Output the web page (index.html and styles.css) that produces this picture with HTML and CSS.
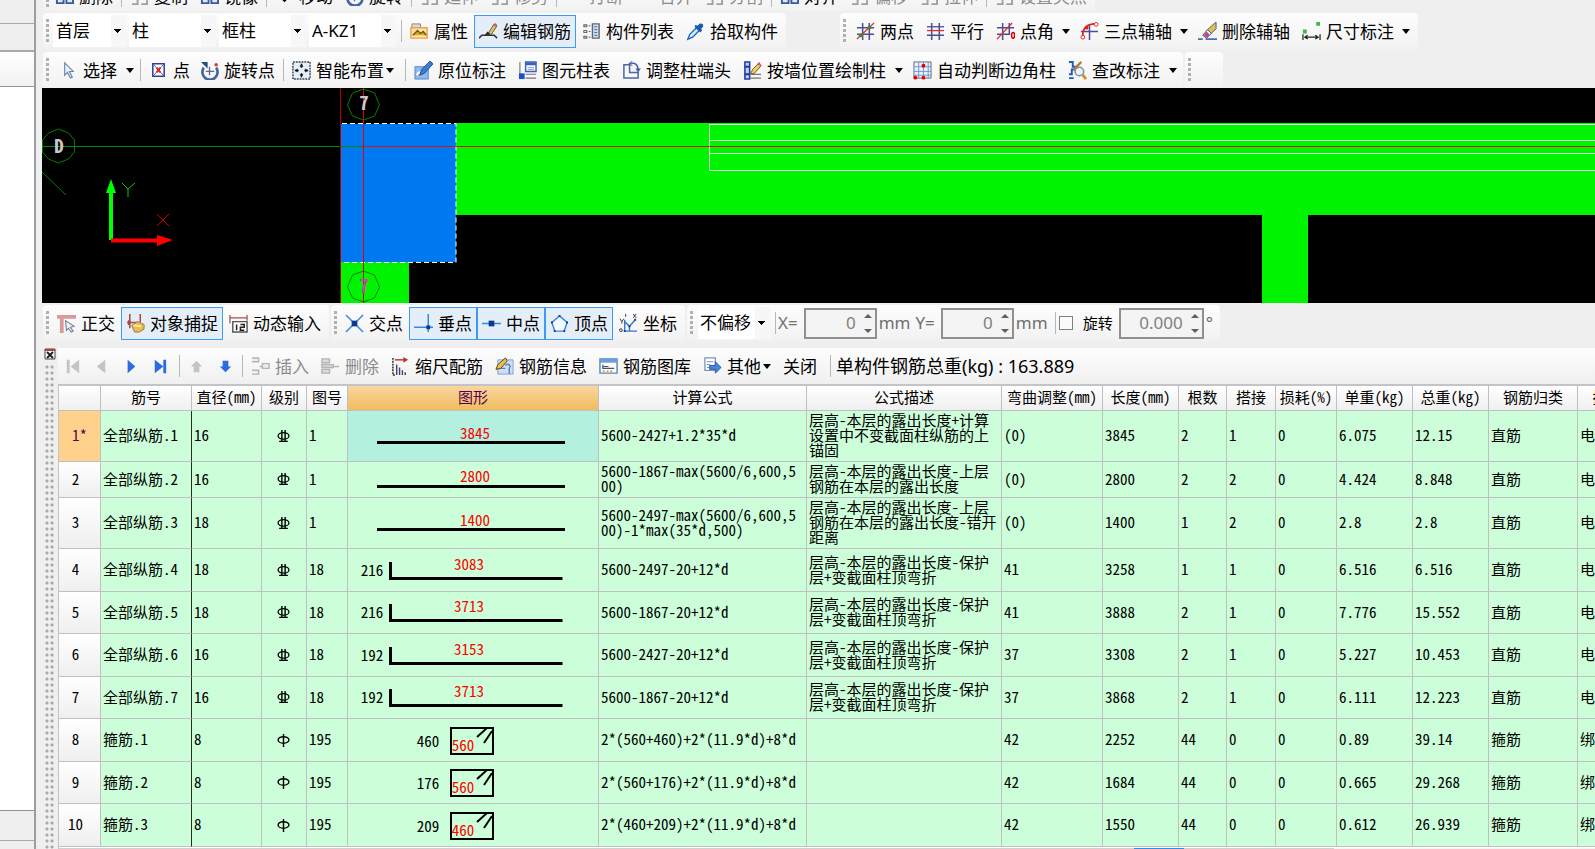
FILE: index.html
```html
<!DOCTYPE html>
<html lang="zh-CN">
<head>
<meta charset="utf-8">
<title>编辑钢筋</title>
<link rel="stylesheet" href="styles.css">
</head>
<body>
<svg class="sprite" aria-hidden="true">
  <symbol id="i-props" viewBox="0 0 20 20"><path d="M2 2h9v4H2z" fill="#d8d8d8" stroke="#888"/><path d="M1 6h17v11H1z" fill="#ffe3a8" stroke="#f0a040" stroke-width="1.5"/><path d="M3 14l5-5 3 3 3-2 3 4" fill="#d8a820" stroke="#6a5a20" stroke-width="1.5"/></symbol>
  <symbol id="i-edit" viewBox="0 0 20 20"><path d="M0 17l3-3h13l3 3" fill="none" stroke="#333" stroke-width="1.6"/><path d="M9 13l7-11 3 2-6 9z" fill="#f0c050" stroke="#555"/><path d="M15 4l2-3 2 2-1 2z" fill="#d06060"/><path d="M6 14l3-4 3 3z" fill="#222"/></symbol>
  <symbol id="i-list" viewBox="0 0 20 20"><path d="M11 2h7v15h-7z" fill="#cfe0f8" stroke="#666" stroke-width="1.5"/><path d="M13 5h3M13 8h3M13 11h3M13 14h3" stroke="#3060b0"/><path d="M2 3h3v2H2zM2 9h3v2H2zM2 15h3v2H2zM7 4h2M7 10h2M7 16h2" fill="none" stroke="#667" stroke-width="1.2"/></symbol>
  <symbol id="i-pick" viewBox="0 0 20 20"><path d="M2 18l2-5 7-7 3 3-7 7z" fill="#d6ecff" stroke="#2068b8" stroke-width="1.5"/><path d="M9 5l6 6 2-2-1-2 2-2c1-3-2-4-4-3l-2 2-2-1z" fill="#1c5cb0"/></symbol>
  <symbol id="i-two" viewBox="0 0 20 20"><path d="M7 1v18M14 1v18M1 6h18M1 13h18" stroke="#4a5098" stroke-width="1.6"/><path d="M1 18L19 1" stroke="#e03030" stroke-width="1.4"/><circle cx="14" cy="6" r="2" fill="#3c8a20"/><circle cx="5" cy="14" r="2" fill="#3c8a20"/></symbol>
  <symbol id="i-par" viewBox="0 0 20 20"><path d="M6 1v18M14 1v18M1 14h18" stroke="#4a5098" stroke-width="1.6"/><path d="M1 5h18" stroke="#4a5098" stroke-width="1.4"/><path d="M1 9h18" stroke="#e03030" stroke-width="1.4"/></symbol>
  <symbol id="i-ang" viewBox="0 0 20 20"><path d="M7 1v18M14 1v12M1 6h18M1 13h14" stroke="#4a5098" stroke-width="1.6"/><path d="M1 18L17 1" stroke="#e03030" stroke-width="1.4"/><ellipse cx="18" cy="14" rx="1.6" ry="3" fill="none" stroke="#e00000" stroke-width="1.6"/></symbol>
  <symbol id="i-three" viewBox="0 0 20 20"><path d="M10 2v17M1 10h18" stroke="#4a5098" stroke-width="1.6"/><path d="M3 16C2 7 7 2 16 2" fill="none" stroke="#e02020" stroke-width="1.8"/><circle cx="3" cy="16" r="2" fill="#fff" stroke="#e02020"/><circle cx="7" cy="6" r="2" fill="#e02020"/><circle cx="17" cy="2.500" r="2" fill="#fff" stroke="#e02020"/></symbol>
  <symbol id="i-erase" viewBox="0 0 20 20"><path d="M0 18h5M8 18h12" stroke="#4870a8" stroke-width="2"/><path d="M5 14l5-6 4 4-5 5z" fill="#fff" stroke="#445"/><path d="M6 14l3-4 3 3-2 4z" fill="#b84890"/><path d="M10 8l9-8v7l-5 5z" fill="#e0c050" stroke="#445a90"/></symbol>
  <symbol id="i-dim" viewBox="0 0 20 20"><path d="M1 8h4v4H1zM15 0h4v4h-4z" fill="#3cb84c"/><path d="M1 13v6M19 13v6M3 16h14M6 14l-3 2 3 2M14 14l3 2-3 2" fill="none" stroke="#222" stroke-width="1.3"/></symbol>
  <symbol id="i-arrow" viewBox="0 0 20 20"><path d="M6 2v13l3-3 3 6 2-1-3-6h4z" fill="#eaf2fb" stroke="#6a86a8" stroke-width="1.2"/></symbol>
  <symbol id="i-pt" viewBox="0 0 20 20"><path d="M4 3h12v13H4z" fill="#fff" stroke="#334090" stroke-width="1.6"/><path d="M5 4l10 11M15 4L5 15" stroke="#4a58a8"/><path d="M8 7l4 5M12 7l-4 5" stroke="#e02020" stroke-width="1.8"/></symbol>
  <symbol id="i-rot" viewBox="0 0 20 20"><path d="M4 7a8 8 0 1 0 13 0" fill="none" stroke="#46649c" stroke-width="2.800"/><path d="M1 1h7v7z" fill="#2c4a88"/><path d="M10 6v9M6 11h9" stroke="#5a6a90" stroke-width="1.4"/><circle cx="17" cy="4" r="1.800" fill="#e03030"/></symbol>
  <symbol id="i-smart" viewBox="0 0 20 20"><path d="M1 1h18v18H1z" fill="#e6eef6" stroke="#345" stroke-width="1.500" stroke-dasharray="2 1"/><path d="M10 3v4M10 13v4M3 10h4M13 10h4" stroke="#111" stroke-width="1.500"/><path d="M8 6l2-3 2 3zM8 14l2 3 2-3zM6 8l-3 2 3 2zM14 8l3 2-3 2z" fill="#111"/></symbol>
  <symbol id="i-note" viewBox="0 0 20 20"><path d="M1 6h14v13H1z" fill="#8fb8ec" stroke="#5a88c8"/><path d="M3 15c2-5 3-2 5-4" fill="none" stroke="#fff" stroke-width="2"/><path d="M6 15l2-6L17 0l3 3-9 10z" fill="#3d7bd0" stroke="#1f4f9c"/></symbol>
  <symbol id="i-sheet" viewBox="0 0 20 20"><path d="M2 1v18M8 18h11M8 14h11" stroke="#777" stroke-width="1.2"/><path d="M8 1h11v10H8z" fill="#fff" stroke="#3a62b8" stroke-width="1.5"/><path d="M8 3h11" stroke="#3a62b8" stroke-width="3"/><path d="M10 7h7M10 9h7" stroke="#7a9ad8"/><path d="M1 13h6v6H1z" fill="#1c50c8"/></symbol>
  <symbol id="i-adj" viewBox="0 0 20 20"><path d="M2 4h6v8h9v6H2z" fill="#f4f8ff" stroke="#5068a0" stroke-width="1.6"/><path d="M8 3c6-2 9 1 9 7" fill="none" stroke="#4a60b0" stroke-width="1.6"/><path d="M14 8l3 4 3-4z" fill="#4a60b0"/><path d="M11 0L7 3l4 2" fill="none" stroke="#4a60b0"/></symbol>
  <symbol id="i-wall" viewBox="0 0 20 20"><path d="M2 1h5v18H2z" fill="#bcd0f4" stroke="#2038a0" stroke-width="1.6"/><path d="M2 6h5M2 14h5" stroke="#2038a0" stroke-width="2"/><path d="M7 18h12M9 14h10" stroke="#777" stroke-width="1.3"/><path d="M8 14l2-5 7-7 2 3-7 8z" fill="#f0d060" stroke="#665020"/><path d="M15 3l2-2 2 3-2 1z" fill="#d06060"/></symbol>
  <symbol id="i-grid" viewBox="0 0 20 20"><path d="M1 1h18v17H1z" fill="#e8f0fc" stroke="#667"/><path d="M6 1v17M11 1v17M16 1v17M1 6h18M1 11h18M1 15h18" stroke="#6f95d0"/><circle cx="11" cy="5" r="2" fill="#e00000"/><circle cx="2.500" cy="17.500" r="2" fill="#e00000"/><circle cx="11" cy="17.500" r="2" fill="#e00000"/></symbol>
  <symbol id="i-check" viewBox="0 0 20 20"><path d="M1 1h4v5h3v3H4v5H1M1 18h5" fill="none" stroke="#2058c0" stroke-width="2"/><path d="M6 9l8-8" stroke="#b08030" stroke-width="2.500"/><circle cx="12" cy="11" r="4.500" fill="#eef6ff" stroke="#8090a0" stroke-width="1.600"/><path d="M15 14l4 5" stroke="#d09030" stroke-width="3"/></symbol>
  <symbol id="i-ortho" viewBox="0 0 20 20"><path d="M0 3h20M5 1v19" stroke="#d99a9a" stroke-width="4"/><path d="M9 7l9 6-4 1 3 4-2 1-3-4-2 2z" fill="#f2f5fa" stroke="#76869a" stroke-width="1.200"/></symbol>
  <symbol id="i-osnap" viewBox="0 0 20 20"><path d="M4 0v15M15 0v9M1 9h12" stroke="#a84848" stroke-width="1.600"/><path d="M2 6l4 3-4 3z" fill="#a84848"/><path d="M6 12l6-4 7 3v5l-5 3H9z" fill="#e8bc58" stroke="#a07828"/><path d="M8 12l8 1" stroke="#fff0b0" stroke-width="2"/></symbol>
  <symbol id="i-dyn" viewBox="0 0 20 20"><path d="M1 1v9M19 1v6M1 4h18" stroke="#a05050" stroke-width="1.300"/><path d="M4 8h15v11H4z" fill="#fff" stroke="#555" stroke-width="1.500"/><path d="M8 11v6M12 11h4v3h-4v3h4" fill="none" stroke="#222" stroke-width="1.600"/></symbol>
  <symbol id="i-cross" viewBox="0 0 20 20"><path d="M1 1l18 18M19 1L1 19" stroke="#3a86d8" stroke-width="1.500"/><path d="M7 7h6v6H7z" fill="#0c3a8c"/></symbol>
  <symbol id="i-perp" viewBox="0 0 20 20"><path d="M15 0v19M0 14h20" stroke="#3a86d8" stroke-width="1.600"/><path d="M13 12h4v4h-4z" fill="#0c3a8c"/></symbol>
  <symbol id="i-mid" viewBox="0 0 20 20"><path d="M0 10h20" stroke="#3a86d8" stroke-width="1.600"/><path d="M7 7h6v6H7z" fill="#0c3a8c"/></symbol>
  <symbol id="i-vert" viewBox="0 0 20 20"><path d="M10 2l8 7-3 9H5L2 9z" fill="#f4faff" stroke="#3a86d8" stroke-width="1.500"/><path d="M9 1h2v2H9zM1 8h2v2H1zM17 8h2v2h-2zM4 17h2v2H4zM14 17h2v2h-2z" fill="#0c3a8c"/></symbol>
  <symbol id="i-coord" viewBox="0 0 20 20"><path d="M6 6v12h13M6 8l5 5 6-7M11 13v5" fill="none" stroke="#3a76c8" stroke-width="1.500"/><path d="M1 5l2 3 2-3M3 8v2M7 0v3M15 0l3 4M18 0l-3 4" fill="none" stroke="#334"/><circle cx="2" cy="17" r="1.500" fill="none" stroke="#334"/><path d="M5 17h2v2H5zM10 12h2v2h-2zM16 5h2v2h-2z" fill="#0c3a8c"/></symbol>
  <symbol id="i-first" viewBox="0 0 20 20"><path d="M4 3h3v14H4zM17 3v14L8 10z"/></symbol>
  <symbol id="i-prev" viewBox="0 0 20 20"><path d="M14 3v14L5 10z"/></symbol>
  <symbol id="i-next" viewBox="0 0 20 20"><path d="M7 3v14l8-7z"/></symbol>
  <symbol id="i-last" viewBox="0 0 20 20"><path d="M14 3h3v14h-3zM5 3v14l9-7z"/></symbol>
  <symbol id="i-up" viewBox="0 0 20 20"><path d="M10 4l6 6h-3v6H7v-6H4z"/></symbol>
  <symbol id="i-down" viewBox="0 0 20 20"><path d="M10 16l6-6h-3V4H7v6H4z"/></symbol>
  <symbol id="i-ins" viewBox="0 0 20 20"><path d="M1 1h7v4H1M1 14h7v4H1M12 7h7v5h-7zM9 10h3" fill="#eee" stroke="#b4b4b4" stroke-width="1.500"/></symbol>
  <symbol id="i-del" viewBox="0 0 20 20"><path d="M1 2h8v4H1zM1 13h8v4H1zM1 8h12v3H1zM14 10h5" fill="#ddd" stroke="#b4b4b4" stroke-width="1.500"/></symbol>
  <symbol id="i-scale" viewBox="0 0 20 20"><path d="M2 1v18h2" fill="none" stroke="#222" stroke-width="1.500" stroke-dasharray="2 1"/><path d="M4 3h12" stroke="#c03020" stroke-width="1.500"/><path d="M13 0l5 3-5 3z" fill="#c03020"/><path d="M6 8v11M9 11v8M12 14v5M15 16v3" stroke="#446" stroke-width="1.500"/></symbol>
  <symbol id="i-info" viewBox="0 0 20 20"><path d="M3 3h16v15H3z" fill="#cfdef8" stroke="#86a0cc"/><path d="M11 9c3-3 6 0 4 3v6M3 12h8" fill="none" stroke="#6080b0" stroke-width="1.500"/><path d="M1 13l2-5 8-7 2 3-7 8z" fill="#e8c050" stroke="#54401a"/></symbol>
  <symbol id="i-lib" viewBox="0 0 20 20"><path d="M1 2h18v15H1z" fill="#fff" stroke="#5a84c0" stroke-width="1.500"/><path d="M1 4h18" stroke="#6f9cdc" stroke-width="4"/><path d="M4 8v4h12M4 10h6" fill="none" stroke="#456" stroke-width="1.200"/><path d="M4 15h2M8 15h2M12 15h2" stroke="#e0a050" stroke-width="2"/></symbol>
  <symbol id="i-other" viewBox="0 0 20 20"><path d="M2 1h11v13H2z" fill="#fff" stroke="#7f94bc" stroke-width="1.400"/><path d="M4 5h7M4 8h4M4 11h3" stroke="#6a86c0"/><path d="M7 9h6V5l6 6-6 6v-4H7z" fill="#4a84e0" stroke="#2458a8"/></symbol>
  <symbol id="i-g3" viewBox="0 0 12 12"><ellipse cx="6" cy="5.500" rx="5" ry="3" fill="none" stroke="#000" stroke-width="1.200"/><path d="M4.500 0v10M7.500 0v10M2 10.500h8" stroke="#000" stroke-width="1.300"/></symbol>
  <symbol id="i-g1" viewBox="0 0 12 12"><ellipse cx="6" cy="5.500" rx="5" ry="3" fill="none" stroke="#000" stroke-width="1.300"/><path d="M6 0v12" stroke="#000" stroke-width="1.300"/></symbol>
  <symbol id="i-edge" viewBox="0 0 20 20"><path d="M2 2h7v15H2zM12 8h7v9h-7z" fill="#dfe9fa" stroke="#3a5a9c" stroke-width="2"/></symbol>
  <symbol id="i-edgeg" viewBox="0 0 20 20"><path d="M2 4h6v14H2M12 10h6v8h-6" fill="none" stroke="#a0a0a0" stroke-width="2"/></symbol>
</svg>

<div class="app">
  <aside class="side">
    <div class="side-tab"></div>
    <div class="side-tab second"></div>
    <div class="side-head"></div>
    <div class="side-body"></div>
    <div class="side-tab third"></div>
    <div class="side-foot"></div>
  </aside>

  <main class="main">
    <div class="bar clipped">
      <div class="strip">
        <span class="grip"></span>
        <button class="tool"><svg><use href="#i-edge"/></svg>删除</button><span class="sep"></span>
        <button class="tool"><svg><use href="#i-edgeg"/></svg>复制</button>
        <button class="tool"><svg><use href="#i-edge"/></svg>镜像</button><span class="sep"></span>
        <button class="tool"><svg><use href="#i-down"/></svg>移动</button>
        <button class="tool"><svg><use href="#i-rot"/></svg>旋转</button><span class="sep"></span>
        <button class="tool" disabled><svg><use href="#i-edgeg"/></svg>延伸</button>
        <button class="tool" disabled><svg><use href="#i-edgeg"/></svg>修剪</button><span class="sep"></span>
        <button class="tool" disabled><svg></svg>打断</button>
        <button class="tool" disabled><svg></svg>合并</button>
        <button class="tool" disabled><svg><use href="#i-edgeg"/></svg>分割</button><span class="sep"></span>
        <button class="tool"><svg><use href="#i-edge"/></svg>对齐</button>
        <button class="tool" disabled><svg><use href="#i-edgeg"/></svg>偏移</button>
        <button class="tool" disabled><svg><use href="#i-edgeg"/></svg>拉伸</button><span class="sep"></span>
        <button class="tool" disabled><svg><use href="#i-edgeg"/></svg>设置夹点</button>
      </div>
    </div>

    <div class="bar">
      <div class="strip strip-props">
        <span class="grip"></span>
        <div class="combos">
          <select class="combo short" aria-label="楼层"><option>首层</option></select>
          <select class="combo" aria-label="构件类型"><option>柱</option></select>
          <select class="combo" aria-label="构件类别"><option>框柱</option></select>
          <select class="combo" aria-label="构件名称"><option>A-KZ1</option></select>
        </div>
        <span class="sep lead"></span>
        <button class="tool"><svg><use href="#i-props"/></svg>属性</button>
        <button class="tool on"><svg><use href="#i-edit"/></svg>编辑钢筋</button>
        <button class="tool"><svg><use href="#i-list"/></svg>构件列表</button>
        <button class="tool"><svg><use href="#i-pick"/></svg>拾取构件</button>
      </div>
      <div class="strip strip-axis">
        <span class="grip"></span>
        <button class="tool"><svg><use href="#i-two"/></svg>两点</button>
        <button class="tool"><svg><use href="#i-par"/></svg>平行</button>
        <button class="tool menu"><svg><use href="#i-ang"/></svg>点角</button>
        <button class="tool menu"><svg><use href="#i-three"/></svg>三点辅轴</button>
        <button class="tool"><svg><use href="#i-erase"/></svg>删除辅轴</button>
        <button class="tool menu"><svg><use href="#i-dim"/></svg>尺寸标注</button>
      </div>
    </div>

    <div class="bar">
      <div class="strip">
        <span class="grip"></span>
        <button class="tool menu"><svg><use href="#i-arrow"/></svg>选择</button><span class="sep"></span>
        <button class="tool compact"><svg><use href="#i-pt"/></svg>点</button>
        <button class="tool"><svg><use href="#i-rot"/></svg>旋转点</button><span class="sep"></span>
        <button class="tool menu tight"><svg><use href="#i-smart"/></svg>智能布置</button><span class="sep lead"></span>
        <button class="tool"><svg><use href="#i-note"/></svg>原位标注</button>
        <button class="tool"><svg><use href="#i-sheet"/></svg>图元柱表</button>
        <button class="tool"><svg><use href="#i-adj"/></svg>调整柱端头</button>
        <button class="tool menu"><svg><use href="#i-wall"/></svg>按墙位置绘制柱</button>
        <button class="tool"><svg><use href="#i-grid"/></svg>自动判断边角柱</button>
        <button class="tool menu"><svg><use href="#i-check"/></svg>查改标注</button>
      </div>
      <div class="strip empty"><span class="grip"></span></div>
    </div>

    <svg class="canvas" role="img" aria-label="绘图区">
      <rect width="100%" height="100%" fill="#000"/>
      <rect x="413" y="35" width="100%" height="92" fill="#00f300"/>
      <rect x="1220" y="127" width="46" height="88" fill="#00f300"/>
      <rect x="299" y="174" width="68" height="41" fill="#00f300"/>
      <rect x="299" y="36" width="115" height="138" fill="#0078f0"/>
      <path d="M300 35.500H414V174.500H300" fill="none" stroke="#fff" stroke-dasharray="5 3"/>
      <path d="M667.500 36V82.500H1900M667.500 52.500H1900M667.500 65.500H1900M667.500 36.500H1900" fill="none" stroke="#d8ffd8"/>
      <path d="M0 58.500H321" stroke="#008a00"/>
      <path d="M321 58.500H1900" stroke="#e01400"/>
      <path d="M298.500 0V215" stroke="#b00000"/>
      <path d="M321.500 0V215" stroke="#e00010"/>
      <g fill="none" stroke="#008000">
        <path d="M16.500 41l10 4 6 7v12l-6 7-10 4-10-4-6-7v-12l6-7z"/>
        <path d="M321.500 1l11 4 5 12-5 11-11 4-11-4-5-11 5-12z"/>
        <path d="M321.500 183l11 4 5 12-5 11-11 4-11-4-5-11 5-12z"/>
        <path d="M0 84l24 23"/>
      </g>
      <text class="axis" x="17" y="65">D</text>
      <text class="axis" x="322" y="22">7</text>
      <text class="axis low" x="322" y="205">7</text>
      <path d="M69 152V104" stroke="#0f0" stroke-width="4"/><path d="M64 105l5-14 5 14z" fill="#0f0"/>
      <path d="M69 152.500H117" stroke="#f00" stroke-width="4"/><path d="M115 147l16 5-16 6z" fill="#f00"/>
      <path d="M80 95l6 6 7-6M86 101v8" fill="none" stroke="#00d000"/>
      <path d="M115 126l12 12M127 126l-12 12" stroke="#d00000"/>
    </svg>

    <div class="bar snapbar">
      <div class="strip">
        <span class="grip"></span>
        <button class="tool"><svg><use href="#i-ortho"/></svg>正交</button>
        <button class="tool on"><svg><use href="#i-osnap"/></svg>对象捕捉</button>
        <button class="tool"><svg><use href="#i-dyn"/></svg>动态输入</button>
      </div>
      <div class="strip">
        <span class="grip"></span>
        <button class="tool"><svg><use href="#i-cross"/></svg>交点</button>
        <button class="tool on"><svg><use href="#i-perp"/></svg>垂点</button>
        <button class="tool on"><svg><use href="#i-mid"/></svg>中点</button>
        <button class="tool on"><svg><use href="#i-vert"/></svg>顶点</button>
        <button class="tool"><svg><use href="#i-coord"/></svg>坐标</button>
      </div>
      <div class="strip offsets">
        <span class="grip"></span>
        <select class="combo offset" aria-label="偏移方式"><option>不偏移</option></select>
        <span class="sep lead"></span>
        <label for="off-x">X=</label>
        <span class="spin"><input id="off-x" value="0"><span class="steps"><button aria-label="X 增加"></button><button aria-label="X 减少"></button></span></span>
        <span class="unit">mm</span>
        <label for="off-y">Y=</label>
        <span class="spin"><input id="off-y" value="0"><span class="steps"><button aria-label="Y 增加"></button><button aria-label="Y 减少"></button></span></span>
        <span class="unit">mm</span>
        <span class="sep"></span>
        <input class="tick" type="checkbox" id="rot-on">
        <label class="rot" for="rot-on">旋转</label>
        <span class="spin angle"><input aria-label="旋转角度" value="0.000"><span class="steps"><button aria-label="角度增加"></button><button aria-label="角度减少"></button></span></span>
        <span class="unit">°</span>
      </div>
    </div>

    <section class="dock">
      <div class="dock-edge">
        <button class="dock-close" aria-label="关闭面板"><svg viewBox="0 0 12 12"><path d="M1 1h10v10H1z" fill="#fff" stroke="#444"/><path d="M1 2h10" stroke="#a04848" stroke-width="2"/><path d="M3 4l6 6M9 4l-6 6" stroke="#222" stroke-width="2"/></svg></button>
        <div class="dock-grip"></div>
      </div>
      <div class="dock-body">
        <div class="navbar">
          <button class="nav off" aria-label="首条"><svg><use href="#i-first"/></svg></button>
          <button class="nav off" aria-label="上一条"><svg><use href="#i-prev"/></svg></button>
          <button class="nav" aria-label="下一条"><svg><use href="#i-next"/></svg></button>
          <button class="nav" aria-label="末条"><svg><use href="#i-last"/></svg></button>
          <span class="sep lead"></span>
          <button class="nav off" aria-label="上移"><svg><use href="#i-up"/></svg></button>
          <button class="nav" aria-label="下移"><svg><use href="#i-down"/></svg></button>
          <span class="sep"></span>
          <button class="tool" disabled><svg><use href="#i-ins"/></svg>插入</button>
          <button class="tool" disabled><svg><use href="#i-del"/></svg>删除</button>
          <button class="tool"><svg><use href="#i-scale"/></svg>缩尺配筋</button>
          <button class="tool"><svg><use href="#i-info"/></svg>钢筋信息</button>
          <button class="tool"><svg><use href="#i-lib"/></svg>钢筋图库</button>
          <button class="tool menu tight"><svg><use href="#i-other"/></svg>其他</button>
          <button class="tool">关闭</button>
          <span class="sep wide"></span>
          <span class="total">单构件钢筋总重(kg) : 163.889</span>
        </div>

        <div class="sheet">
        <table>
          <colgroup><col class="c-no"><col class="c-name"><col class="c-dia"><col class="c-grade"><col class="c-fig"><col class="c-shape"><col class="c-calc"><col class="c-desc"><col class="c-bend"><col class="c-len"><col class="c-qty"><col class="c-lap"><col class="c-loss"><col class="c-unit"><col class="c-sum"><col class="c-type"><col class="c-join"></colgroup>
          <thead><tr><th></th><th>筋号</th><th>直径(mm)</th><th>级别</th><th>图号</th><th class="picked">图形</th><th>计算公式</th><th>公式描述</th><th>弯曲调整(mm)</th><th>长度(mm)</th><th>根数</th><th>搭接</th><th>损耗(%)</th><th>单重(kg)</th><th>总重(kg)</th><th>钢筋归类</th><th>搭接形式</th></tr></thead>
          <tbody>
          <tr class="r3"><th class="picked">1*</th><td>全部纵筋.1</td><td>16</td><td class="g"><svg role="img" aria-label="三级"><use href="#i-g3"/></svg></td><td>1</td>
            <td class="shape picked"><svg height="50"><path d="M29 31.500h188"/><text class="red" x="127" y="28">3845</text></svg></td>
            <td>5600-2427+1.2*35*d</td><td>层高-本层的露出长度+计算<br>设置中不变截面柱纵筋的上<br>锚固</td><td>(0)</td><td>3845</td><td>2</td><td>1</td><td>0</td><td>6.075</td><td>12.15</td><td>直筋</td><td>电渣压力焊</td></tr>
          <tr class="r2"><th>2</th><td>全部纵筋.2</td><td>16</td><td class="g"><svg role="img" aria-label="三级"><use href="#i-g3"/></svg></td><td>1</td>
            <td class="shape"><svg height="35"><path d="M29 24.500h188"/><text class="red" x="127" y="20">2800</text></svg></td>
            <td>5600-1867-max(5600/6,600,5<br>00)</td><td>层高-本层的露出长度-上层<br>钢筋在本层的露出长度</td><td>(0)</td><td>2800</td><td>2</td><td>2</td><td>0</td><td>4.424</td><td>8.848</td><td>直筋</td><td>电渣压力焊</td></tr>
          <tr class="r3"><th>3</th><td>全部纵筋.3</td><td>18</td><td class="g"><svg role="img" aria-label="三级"><use href="#i-g3"/></svg></td><td>1</td>
            <td class="shape"><svg height="50"><path d="M29 31.500h188"/><text class="red" x="127" y="28">1400</text></svg></td>
            <td>5600-2497-max(5600/6,600,5<br>00)-1*max(35*d,500)</td><td>层高-本层的露出长度-上层<br>钢筋在本层的露出长度-错开<br>距离</td><td>(0)</td><td>1400</td><td>1</td><td>2</td><td>0</td><td>2.8</td><td>2.8</td><td>直筋</td><td>电渣压力焊</td></tr>
          <tr><th>4</th><td>全部纵筋.4</td><td>18</td><td class="g"><svg role="img" aria-label="三级"><use href="#i-g3"/></svg></td><td>18</td>
            <td class="shape"><svg height="41"><path d="M42.500 12v16.500h172"/><text x="24" y="26">216</text><text class="red" x="121" y="20">3083</text></svg></td>
            <td>5600-2497-20+12*d</td><td>层高-本层的露出长度-保护<br>层+变截面柱顶弯折</td><td>41</td><td>3258</td><td>1</td><td>1</td><td>0</td><td>6.516</td><td>6.516</td><td>直筋</td><td>电渣压力焊</td></tr>
          <tr><th>5</th><td>全部纵筋.5</td><td>18</td><td class="g"><svg role="img" aria-label="三级"><use href="#i-g3"/></svg></td><td>18</td>
            <td class="shape"><svg height="41"><path d="M42.500 12v16.500h172"/><text x="24" y="26">216</text><text class="red" x="121" y="20">3713</text></svg></td>
            <td>5600-1867-20+12*d</td><td>层高-本层的露出长度-保护<br>层+变截面柱顶弯折</td><td>41</td><td>3888</td><td>2</td><td>1</td><td>0</td><td>7.776</td><td>15.552</td><td>直筋</td><td>电渣压力焊</td></tr>
          <tr><th>6</th><td>全部纵筋.6</td><td>16</td><td class="g"><svg role="img" aria-label="三级"><use href="#i-g3"/></svg></td><td>18</td>
            <td class="shape"><svg height="41"><path d="M42.500 12v16.500h172"/><text x="24" y="26">192</text><text class="red" x="121" y="20">3153</text></svg></td>
            <td>5600-2427-20+12*d</td><td>层高-本层的露出长度-保护<br>层+变截面柱顶弯折</td><td>37</td><td>3308</td><td>2</td><td>1</td><td>0</td><td>5.227</td><td>10.453</td><td>直筋</td><td>电渣压力焊</td></tr>
          <tr><th>7</th><td>全部纵筋.7</td><td>16</td><td class="g"><svg role="img" aria-label="三级"><use href="#i-g3"/></svg></td><td>18</td>
            <td class="shape"><svg height="41"><path d="M42.500 12v16.500h172"/><text x="24" y="26">192</text><text class="red" x="121" y="20">3713</text></svg></td>
            <td>5600-1867-20+12*d</td><td>层高-本层的露出长度-保护<br>层+变截面柱顶弯折</td><td>37</td><td>3868</td><td>2</td><td>1</td><td>0</td><td>6.111</td><td>12.223</td><td>直筋</td><td>电渣压力焊</td></tr>
          <tr><th>8</th><td>箍筋.1</td><td>8</td><td class="g"><svg role="img" aria-label="一级"><use href="#i-g1"/></svg></td><td>195</td>
            <td class="shape"><svg height="41"><path class="hoop" d="M103 8h42v26h-42zM129 17l10-9M136 23l8-12"/><text x="80" y="27">460</text><text class="red" x="115" y="31">560</text></svg></td>
            <td>2*(560+460)+2*(11.9*d)+8*d</td><td></td><td>42</td><td>2252</td><td>44</td><td>0</td><td>0</td><td>0.89</td><td>39.14</td><td>箍筋</td><td>绑扎</td></tr>
          <tr><th>9</th><td>箍筋.2</td><td>8</td><td class="g"><svg role="img" aria-label="一级"><use href="#i-g1"/></svg></td><td>195</td>
            <td class="shape"><svg height="41"><path class="hoop" d="M103 8h42v26h-42zM129 17l10-9M136 23l8-12"/><text x="80" y="27">176</text><text class="red" x="115" y="31">560</text></svg></td>
            <td>2*(560+176)+2*(11.9*d)+8*d</td><td></td><td>42</td><td>1684</td><td>44</td><td>0</td><td>0</td><td>0.665</td><td>29.268</td><td>箍筋</td><td>绑扎</td></tr>
          <tr><th>10</th><td>箍筋.3</td><td>8</td><td class="g"><svg role="img" aria-label="一级"><use href="#i-g1"/></svg></td><td>195</td>
            <td class="shape"><svg height="41"><path class="hoop" d="M103 8h42v26h-42zM129 17l10-9M136 23l8-12"/><text x="80" y="27">209</text><text class="red" x="115" y="31">460</text></svg></td>
            <td>2*(460+209)+2*(11.9*d)+8*d</td><td></td><td>42</td><td>1550</td><td>44</td><td>0</td><td>0</td><td>0.612</td><td>26.939</td><td>箍筋</td><td>绑扎</td></tr>
          </tbody>
        </table>
        <div class="scroll"><span class="thumb"></span></div>
        </div>
      </div>
    </section>
  </main>
</div>
</body>
</html>
```
FILE: styles.css
```css
* { box-sizing: border-box; }
body {
  margin: 0;
  height: 100vh;
  overflow: hidden;
  background: #efefef;
  color: #000;
  font: 17px/24px "Noto Sans CJK SC", "Noto Sans", sans-serif;
}
.sprite { display: none; }
button { border: 0; margin: 0; padding: 0; background: none; font: inherit; color: inherit; white-space: nowrap; }
.app { display: flex; height: 100%; overflow: hidden; }

/* left panel */
.side {
  flex: 0 0 36px;
  display: flex;
  flex-direction: column;
  border-right: 2px solid #9c9ca4;
}
.side-tab { flex: 0 0 24px; border-bottom: 1px solid #a8a8a8; }
.side-tab.second { flex-basis: 28px; border-bottom-width: 2px; }
.side-tab.third { flex-basis: 30px; }
.side-head { flex: 0 0 34px; background: linear-gradient(#fff, #f1f1f1); }
.side-body { flex: 1; background: #fff; border: solid #8e959c; border-width: 1px 0; }
.side-foot { flex: 0 0 8px; }

/* toolbars */
.main { flex: 1; min-width: 0; display: flex; flex-direction: column; padding-left: 6px; }
.bar { display: flex; gap: 2px; flex: 0 0 39px; padding: 0 1px 3px; }
.bar.clipped { flex-basis: 13px; align-items: flex-end; overflow: hidden; padding-bottom: 2px; }
.bar.clipped .strip { height: 30px; }
.bar.clipped .grip { margin-right: 0; }
.strip {
  display: flex;
  align-items: center;
  padding: 0 2px 0 3px;
  border-radius: 4px;
  background: linear-gradient(#fdfdfd, #f2f2f2);
}
.strip-axis { margin-left: 52px; padding-right: 4px; }
.strip.empty { width: 38px; }
.grip {
  flex: 0 0 3px;
  height: 24px;
  margin-right: 4px;
  background: repeating-linear-gradient(#b0b0b0 0 3px, transparent 3px 5px);
}
.sep { flex: 0 0 1px; height: 22px; margin: 0 2px; background: #b8b8b8; }
.sep.lead { margin: 0 2px 0 5px; }
.sep.wide { margin: 0 5px 0 7px; }
.tool { display: flex; align-items: center; gap: 5px; height: 33px; padding: 0 6px; }
.tool svg { width: 19px; height: 19px; flex: none; }
.tool:disabled { color: #8c8c8c; }
.tool.compact { padding: 0 4px 0 6px; }
.tool.on { padding: 0 4px; border: 1px solid #3c9bf8; background: #e4eef8; }
.tool.menu::after {
  content: "";
  margin: 0 -2px 0 4px;
  border: solid transparent;
  border-width: 5px 4px 0;
  border-top-color: #000;
}
.tool.menu.tight::after { margin: 0 0 0 -3px; }
.strip-axis .tool.menu::after { margin: 0 -2px 0 3px; }
.combos { display: flex; gap: 3px; }
.combo {
  appearance: none;
  width: 87px;
  height: 32px;
  padding: 0 18px 0 3px;
  border: 0;
  border-radius: 0;
  color: #000;
  font: 17px/24px "Noto Sans", "Noto Sans CJK SC", sans-serif;
  background:
    linear-gradient(to bottom right, #000 50%, transparent 50%) right 4px center / 4px 4px no-repeat,
    linear-gradient(to bottom left, #000 50%, transparent 50%) right 8px center / 4px 4px no-repeat,
    linear-gradient(to left, #f7f7f7 15px, #fff 15px);
}
.combo.short { width: 73px; }
.combo.offset { width: 72px; }

.canvas { flex: 0 0 215px; width: 100%; margin-top: -3px; }
.axis { fill: #c8c8c8; font: bold 19px "Noto Sans Mono CJK SC", "Liberation Mono", monospace; text-anchor: middle; }
.axis.low { fill: #b050a0; }

/* snap row */
.snapbar { flex-basis: 45px; padding: 2px 1px 7px; }
.snapbar .grip { margin-right: 2px; }
.snapbar .offsets .grip { margin-right: 5px; }
.snapbar .combo { padding: 0 14px 0 2px; }
.offsets { color: #707070; font-family: "Noto Sans", "Noto Sans CJK SC", sans-serif; }
.spin {
  display: flex;
  width: 73px;
  height: 31px;
  margin: 0 2px 0 6px;
  border: 2px solid #909090;
  background: #f4f4f4;
}
.spin input {
  flex: 1;
  min-width: 0;
  padding: 0 8px 0 0;
  border: 0;
  background: none;
  color: #808080;
  font: inherit;
  text-align: right;
}
.steps { display: flex; flex-direction: column; justify-content: space-between; padding: 4px 3px 4px 0; }
.steps button { border: solid transparent; border-width: 0 4px 4px; border-bottom-color: #606060; }
.steps button:last-child { border-width: 4px 4px 0; border-top-color: #606060; }
.spin.angle { width: 85px; }
.unit { margin-right: 5px; }
.tick { appearance: none; width: 14px; height: 14px; margin: 0 10px 0 1px; border: 1px solid #808080; background: #fafafa; }
.rot { color: #000; font-size: 15px; }

/* rebar editor */
.dock { flex: 1; min-height: 0; display: flex; }
.dock-edge { flex: 0 0 16px; display: flex; flex-direction: column; padding-left: 2px; }
.dock-close { width: 12px; height: 12px; }
.dock-close svg { display: block; width: 12px; height: 12px; }
.dock-grip {
  flex: 1;
  margin: 4px 4px 0 1px;
  background: radial-gradient(circle at 2px 3px, #a8a8a8 1px, transparent 2px) 0 0 / 5px 6px;
}
.dock-body { flex: 1; min-width: 0; display: flex; flex-direction: column; }
.navbar {
  flex: 0 0 36px;
  display: flex;
  align-items: center;
  background: linear-gradient(#fdfdfd, #f0f0f0);
}
.nav { width: 29px; height: 30px; fill: #2c6ce0; }
.nav svg { width: 19px; height: 19px; display: block; margin: auto; }
.nav.off { fill: #c4c4c4; }
.total { font: 18px/24px "Noto Sans", "Noto Sans CJK SC", sans-serif; }
.sheet { flex: 1; min-height: 0; overflow: hidden; border: solid #c4c4c8; border-width: 2px 0 0 1px; background: #fff; }
table {
  width: 100%;
  table-layout: fixed;
  border-collapse: separate;
  border-spacing: 0;
  font: 15px/15px "Noto Sans Mono CJK SC", "Noto Sans CJK SC", monospace;
}
th, td { padding: 0 0 3px; border: solid #c0c0c4; border-width: 0 1px 1px 0; white-space: nowrap; overflow: hidden; }
th { font-weight: normal; text-align: center; background: linear-gradient(#fff, #efefef); }
thead th { height: 25px; }
tbody th { padding-right: 8px; }
td { padding-left: 2px; background: #ccffd9; height: 42px; text-align: left; }
tbody tr:nth-child(even) td { height: 43px; }
tbody tr.r3 td { height: 51px; }
tbody tr.r2 td { height: 36px; }
tbody td:nth-child(2) { border-right-color: #203020; }
thead th.picked { background: linear-gradient(#f9d6a0, #f0bc5c); color: #5a0050; }
tbody th.picked { padding-right: 0; background: #ffd28c; color: #5a0050; }
td.shape, td.g { padding: 0; }
td.g { padding-right: 2px; }
td.picked { background: #b4f0df; }
td.g svg { display: block; width: 13px; height: 13px; margin: auto; }
.shape svg { display: block; width: 100%; }
.shape path { fill: none; stroke: #000; stroke-width: 3; }
.shape .hoop { stroke-width: 2; }
.shape text { font-size: 15px; text-anchor: middle; }
.shape .red { fill: #ff0000; }
.c-no { width: 42px; }
.c-name { width: 91px; }
.c-dia { width: 70px; }
.c-grade { width: 45px; }
.c-fig { width: 41px; }
.c-shape { width: 251px; }
.c-calc { width: 208px; }
.c-desc { width: 195px; }
.c-bend { width: 101px; }
.c-len, .c-unit, .c-sum { width: 76px; }
.c-qty { width: 48px; }
.c-lap { width: 49px; }
.c-loss { width: 61px; }
.c-type { width: 89px; }
.c-join { width: 90px; }
.scroll { height: 4px; margin-top: 1px; padding-left: 70%; background: linear-gradient(to right, #d0d0d0 83%, #f4f4f4 83%); }
.thumb { display: block; width: 50px; height: 4px; background: #2c8cf0; }
```
